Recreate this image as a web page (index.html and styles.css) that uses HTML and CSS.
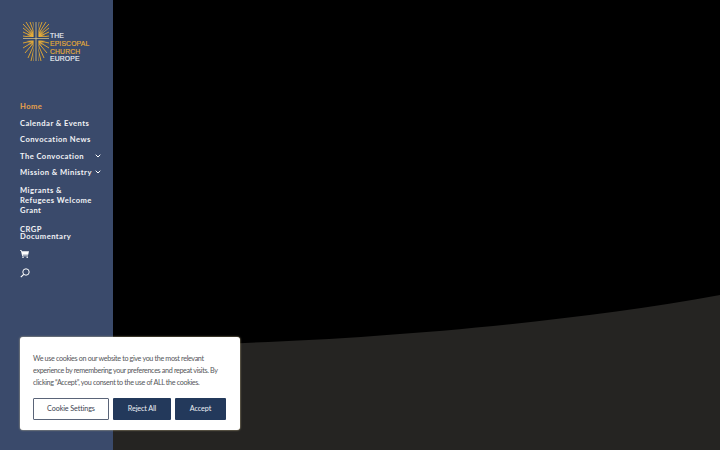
FILE: index.html
```html
<!DOCTYPE html>
<html lang="en">
<head>
<meta charset="utf-8">
<title>The Episcopal Church in Europe</title>
<link rel="stylesheet" href="styles.css">
</head>
<body>
<div class="page">
  <aside class="sidebar">
    <div class="logo">
      <svg class="logo-mark" width="26" height="39" viewBox="0 0 26 39" aria-hidden="true">
        <defs>
          <radialGradient id="glow" cx="13" cy="16" r="10" gradientUnits="userSpaceOnUse">
            <stop offset="0" stop-color="#f7c23c"/>
            <stop offset=".55" stop-color="#f0b136" stop-opacity=".8"/>
            <stop offset="1" stop-color="#f0b136" stop-opacity="0"/>
          </radialGradient>
        </defs>
        <g stroke="#e8ab30" stroke-width=".9">
          <path d="M13 16 L0 2 M13 16 L3 0 M13 16 L7 0 M13 16 L10 0 M13 16 L0 6 M13 16 L0 10 M13 16 L0 14 M13 16 L26 2 M13 16 L23 0 M13 16 L19 0 M13 16 L16 0 M13 16 L26 6 M13 16 L26 10 M13 16 L26 14"/>
          <path d="M13 18 L0 21 M13 18 L0 26 M13 18 L2 31 M13 18 L5 36 M13 18 L8 39 M13 18 L10.5 39 M13 18 L26 21 M13 18 L26 26 M13 18 L24 31 M13 18 L21 36 M13 18 L18 39 M13 18 L15.5 39"/>
        </g>
        <circle cx="13" cy="16" r="10" fill="url(#glow)"/>
        <path d="M10.6 0 H15.4 V39 H10.6 Z M0 15 H26 V18.4 H0 Z" fill="#33466b"/>
        <path d="M12.6 0 H13.4 V39 H12.6 Z M0 16.3 H26 V17.1 H0 Z" fill="#d9c48a"/>
      </svg>
      <div class="logo-text">
        <span>THE</span>
        <span class="gold">EPISCOPAL</span>
        <span class="gold">CHURCH</span>
        <span>EUROPE</span>
      </div>
    </div>
    <nav>
      <ul class="menu">
        <li class="item active"><a>Home</a></li>
        <li class="item"><a>Calendar &amp; Events</a></li>
        <li class="item"><a>Convocation News</a></li>
        <li class="item has-sub"><a>The Convocation</a>
          <svg class="chev" width="6" height="4" viewBox="0 0 6 4" aria-hidden="true"><path d="M.7.7 3 3 5.3.7" fill="none" stroke="#fff" stroke-width="1"/></svg></li>
        <li class="item has-sub"><a>Mission &amp; Ministry</a>
          <svg class="chev" width="6" height="4" viewBox="0 0 6 4" aria-hidden="true"><path d="M.7.7 3 3 5.3.7" fill="none" stroke="#fff" stroke-width="1"/></svg></li>
        <li class="item tall"><a>Migrants &amp; Refugees Welcome Grant</a></li>
        <li class="item tight"><a>CRGP Documentary</a></li>
      </ul>
    </nav>
    <svg class="cart" width="9" height="8" viewBox="0 0 9 8" aria-hidden="true">
      <path d="M0 .3H1.6L2 1.2H9L8.2 4.8H2.7L2.9 5.5H8V6.2H2.2L1 1H0Z" fill="#fff"/>
      <circle cx="3" cy="7.2" r=".8" fill="#fff"/><circle cx="7.2" cy="7.2" r=".8" fill="#fff"/>
    </svg>
    <svg class="search" width="10" height="10" viewBox="0 0 10 10" aria-hidden="true">
      <circle cx="6" cy="4" r="3.2" fill="none" stroke="#fff" stroke-width="1"/>
      <path d="M3.7 6.3 .8 9.2" stroke="#fff" stroke-width="1.2"/>
    </svg>
  </aside>
  <main class="hero">
    <svg class="curve" width="607" height="155" viewBox="0 0 607 155" preserveAspectRatio="none" aria-hidden="true">
      <path d="M0 50 C 130 52 400 38 607 0 V155 H0 Z" fill="#252422"/>
    </svg>
  </main>
  <div class="cookie">
    <p>We use cookies on our website to give you the most relevant experience by remembering your preferences and repeat visits. By clicking “Accept”, you consent to the use of ALL the cookies.</p>
    <div class="actions">
      <button class="btn outline">Cookie Settings</button>
      <button class="btn solid reject">Reject All</button>
      <button class="btn solid accept">Accept</button>
    </div>
  </div>
</div>
</body>
</html>
```
FILE: styles.css
```css
* { box-sizing: border-box; }
html, body { margin: 0; height: 100%; background: #000; overflow: hidden; }
.page { display: flex; width: 720px; height: 450px; position: relative; font-family: Lato, "Noto Sans", sans-serif; }
.sidebar { width: 113px; flex: none; background: #3a4a6b; padding: 22px 0 0 20px; display: flex; flex-direction: column; align-items: flex-start; }
.logo { display: flex; align-items: flex-start; margin: 0 0 0 3px; height: 76px; }
.logo-mark { flex: none; }
.logo-text { display: flex; flex-direction: column; margin: 10px 0 0 1px; font-family: "Liberation Sans", Arial, sans-serif; font-size: 6.8px; line-height: 7.8px; letter-spacing: .15px; color: #edf0f5; -webkit-text-stroke: .15px currentColor; }
.gold { color: #e6ad38; }
.menu { list-style: none; margin: 0; padding: 0; width: 81px; }
.item { height: 16.5px; display: flex; align-items: center; justify-content: space-between; font-size: 7.6px; font-weight: 700; letter-spacing: .45px; color: #f2f3f6; white-space: nowrap; }
.item.active { color: #e9a24a; }
.chev { flex: none; }
.has-sub a { display: block; }
.tall { height: auto; white-space: normal; line-height: 10.2px; margin: 4px 0 10.5px; width: 74px; }
.tight { height: auto; white-space: normal; line-height: 7.5px; width: 60px; }
.cart { margin-top: 9px; }
.search { margin-top: 10px; }
.hero { flex: 1; background: #000; display: flex; align-items: flex-end; }
.curve { display: block; }
.cookie { position: absolute; left: 20px; top: 337px; width: 220px; height: 93px; background: #fff; border-radius: 3px; box-shadow: 0 0 2px #d8c89a; padding: 16px 13px 0; color: #55565a; }
.cookie p { margin: 0; font-size: 7.2px; line-height: 12px; letter-spacing: -.35px; }
.actions { display: flex; gap: 4px; margin-top: 8.5px; }
.btn { height: 22px; font: 400 7.2px Lato, "Noto Sans", sans-serif; letter-spacing: -.1px; border-radius: 1px; padding: 0; }
.outline { width: 76px; background: #fff; border: 1px solid #5a6478; color: #3d4350; }
.solid { background: #23395b; border: 0; color: #eef1f5; }
.reject { width: 58px; }
.accept { width: 51px; }
```
